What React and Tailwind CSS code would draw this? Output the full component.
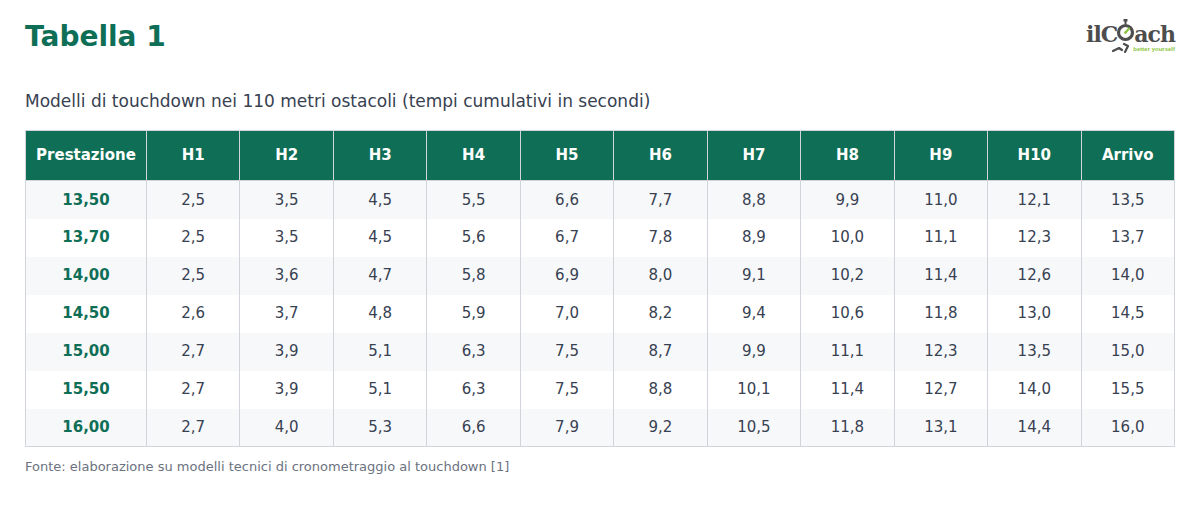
const headers = ["Prestazione", "H1", "H2", "H3", "H4", "H5", "H6", "H7", "H8", "H9", "H10", "Arrivo"];

const rows = [
  ["13,50", "2,5", "3,5", "4,5", "5,5", "6,6", "7,7", "8,8", "9,9", "11,0", "12,1", "13,5"],
  ["13,70", "2,5", "3,5", "4,5", "5,6", "6,7", "7,8", "8,9", "10,0", "11,1", "12,3", "13,7"],
  ["14,00", "2,5", "3,6", "4,7", "5,8", "6,9", "8,0", "9,1", "10,2", "11,4", "12,6", "14,0"],
  ["14,50", "2,6", "3,7", "4,8", "5,9", "7,0", "8,2", "9,4", "10,6", "11,8", "13,0", "14,5"],
  ["15,00", "2,7", "3,9", "5,1", "6,3", "7,5", "8,7", "9,9", "11,1", "12,3", "13,5", "15,0"],
  ["15,50", "2,7", "3,9", "5,1", "6,3", "7,5", "8,8", "10,1", "11,4", "12,7", "14,0", "15,5"],
  ["16,00", "2,7", "4,0", "5,3", "6,6", "7,9", "9,2", "10,5", "11,8", "13,1", "14,4", "16,0"],
];

// logo: wordmark with stopwatch "O", little runner legs and green tagline
function Logo() {
  return (
    <div className="relative flex h-[36px] w-[88px] flex-col items-end leading-none">
      <div
        className="flex items-end text-[22px] font-bold tracking-[-1px] text-[#4d4d4d]"
        style={{ fontFamily: '"DejaVu Serif", serif' }}
      >
        <span>ilC</span>
        <svg width="19" height="24" viewBox="0 0 19 24" className="mx-[-1px] mb-[2px]">
          <rect x="7.5" y="0" width="4" height="2.5" fill="#4d4d4d" />
          <rect x="8.5" y="2" width="2" height="3" fill="#4d4d4d" />
          <circle cx="9.5" cy="13.5" r="7" fill="none" stroke="#4d4d4d" strokeWidth="3.2" />
          <path d="M9.5 13.5 L13 9.5" stroke="#8cc63f" strokeWidth="2.2" strokeLinecap="round" />
          <circle cx="9.5" cy="13.5" r="1.3" fill="#8cc63f" />
        </svg>
        <span>ach</span>
      </div>
      <svg width="26" height="12" viewBox="0 0 26 12" className="absolute left-[24px] top-[22px]">
        <path d="M2 10 L8 7 L11 9" stroke="#4d4d4d" strokeWidth="2.2" fill="none" strokeLinecap="round" strokeLinejoin="round" />
        <path d="M13 3 L17 5 L14 11" stroke="#4d4d4d" strokeWidth="2.2" fill="none" strokeLinecap="round" strokeLinejoin="round" />
      </svg>
      <span
        className="mt-[1px] text-[6px] font-bold text-[#8cc63f]"
        style={{ fontFamily: '"Liberation Sans", sans-serif' }}
      >
        better yourself
      </span>
    </div>
  );
}

export default function App() {
  return (
    <div className="h-[516px] w-[1200px] bg-white px-[25px] pt-[19px]" style={{ fontFamily: '"DejaVu Sans", sans-serif' }}>
      <div className="flex items-start justify-between">
        <h1 className="text-[28px] font-bold leading-[36px] text-[#0f6e56]">Tabella 1</h1>
        <Logo />
      </div>

      <p className="mt-[35px] text-[17px] leading-[22px] text-[#374151]">
        Modelli di touchdown nei 110 metri ostacoli (tempi cumulativi in secondi)
      </p>

      <table className="mt-[18px] w-[1150px] table-fixed border-collapse border border-[#d1d5db]">
        <colgroup>
          <col className="w-[121px]" />
          {headers.slice(1).map((h) => (
            <col key={h} />
          ))}
        </colgroup>
        <thead>
          <tr className="h-[50px] bg-[#0f6e56]">
            {headers.map((h) => (
              <th key={h} className="border border-[#d1d5db] px-1 text-center text-[15px] font-bold text-white">
                {h}
              </th>
            ))}
          </tr>
        </thead>
        <tbody>
          {rows.map((row, i) => (
            <tr key={row[0]} className={`h-[38px] ${i % 2 === 0 ? "bg-[#f7f8fa]" : "bg-white"}`}>
              {row.map((cell, j) => (
                <td
                  key={j}
                  className={`border-x border-[#d1d5db] text-center text-[15px] ${
                    j === 0 ? "font-bold text-[#0f6e56]" : "text-[#374151]"
                  }`}
                >
                  {cell}
                </td>
              ))}
            </tr>
          ))}
        </tbody>
      </table>

      <p className="mt-[12px] text-[13px] leading-[16px] text-[#6b7280]">
        Fonte: elaborazione su modelli tecnici di cronometraggio al touchdown [1]
      </p>
    </div>
  );
}
